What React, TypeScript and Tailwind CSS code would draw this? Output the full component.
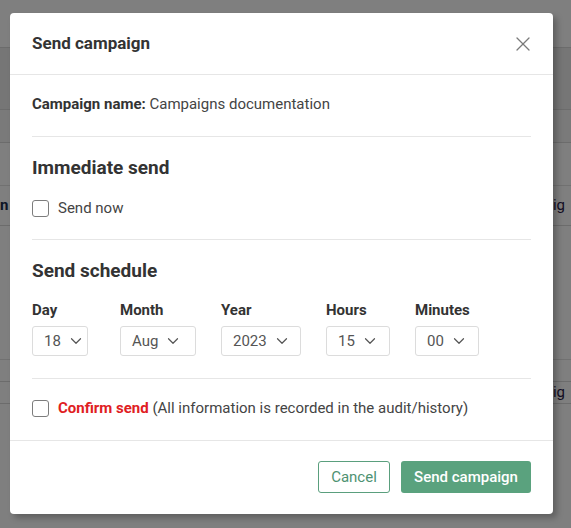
import { ChevronDown, X } from 'lucide-react';

const fields = [
  { label: 'Day', value: '18', col: 'w-[88px]', box: 'w-[56px]' },
  { label: 'Month', value: 'Aug', col: 'w-[101px]', box: 'w-[76px]' },
  { label: 'Year', value: '2023', col: 'w-[105px]', box: 'w-[80px]' },
  { label: 'Hours', value: '15', col: 'w-[89px]', box: 'w-[64px]' },
  { label: 'Minutes', value: '00', col: 'w-[64px]', box: 'w-[64px]' },
];

function Checkbox() {
  return <span className="w-[17px] h-[17px] shrink-0 rounded-[3px] border border-[#7d7d7d] bg-white" />;
}

function Divider() {
  return <div className="h-px bg-[#e6e6e6]" />;
}

export default function App() {
  return (
    <div
      className="relative h-[528px] w-[571px] overflow-hidden bg-white"
      style={{ fontFamily: 'Roboto, "Liberation Sans", sans-serif' }}
    >
      {/* page behind the dialog */}
      <div className="flex flex-col">
        <div className="h-[47px] bg-white" />
        <div className="h-[63px] bg-[#ececec] border-y border-[#d8d8d8]" />
        <div className="h-[33px] bg-[#f4f4f4] border-b border-[#d8d8d8]" />
        <div className="h-[43px] border-b border-[#e2e2e2]" />
        <div className="h-[40px] flex items-center justify-between border-b border-[#d8d8d8] text-[15px]">
          <span className="font-bold text-[#1b2a4a]">n</span>
          <span className="pr-[6px] text-[#2a1a4a]">ig</span>
        </div>
        <div className="h-[134px] border-b border-[#e2e2e2]" />
        <div className="h-[22px] border-b border-[#d8d8d8]" />
        <div className="h-[22px] flex items-center justify-end border-b border-[#d8d8d8] text-[15px] text-[#2a1a4a]">
          <span className="pr-[6px]">ig</span>
        </div>
      </div>

      <div className="absolute inset-0 bg-black/50" />

      <div className="absolute left-[10px] top-[13px] w-[543px] rounded-[4px] bg-white text-[#444] shadow-[4px_4px_6px_rgba(0,0,0,0.25)]">
        <div className="flex h-[62px] items-center justify-between px-[22px] border-b border-[#e6e6e6]">
          <h2 className="text-[17px] font-bold text-[#333]">Send campaign</h2>
          <X className="w-[24px] h-[24px] -mr-[4px] text-[#7a7a7a]" strokeWidth={1.3} />
        </div>

        <div className="px-[22px] pt-[19px] pb-[22px]">
          <p className="text-[15px] leading-[20px]">
            <span className="font-bold text-[#333]">Campaign name:</span> Campaigns documentation
          </p>
          <div className="mt-[22px]"><Divider /></div>

          <h3 className="mt-[19px] text-[19px] leading-[24px] font-bold text-[#333]">Immediate send</h3>
          <label className="mt-[18px] flex items-center gap-[9px] text-[15px] leading-[20px]">
            <Checkbox />
            Send now
          </label>
          <div className="mt-[21px]"><Divider /></div>

          <h3 className="mt-[19px] text-[19px] leading-[24px] font-bold text-[#333]">Send schedule</h3>
          <div className="mt-[17px] flex">
            {fields.map((f) => (
              <div key={f.label} className={f.col}>
                <div className="text-[15px] leading-[20px] font-bold text-[#333]">{f.label}</div>
                <div className={`${f.box} mt-[6px] flex h-[30px] items-center gap-[6px] pl-[11px] rounded-[3px] border border-[#dcdcdc] text-[15px] text-[#555]`}>
                  <span>{f.value}</span>
                  <ChevronDown className="w-[18px] h-[18px] text-[#555]" strokeWidth={1.6} />
                </div>
              </div>
            ))}
          </div>
          <div className="mt-[22px]"><Divider /></div>

          <label className="mt-[19px] flex items-center gap-[9px] text-[15px] leading-[20px]">
            <Checkbox />
            <span>
              <span className="font-bold text-[#e0201f]">Confirm send</span> (All information is recorded in the audit/history)
            </span>
          </label>
        </div>

        <div className="flex justify-end gap-[11px] border-t border-[#e6e6e6] px-[22px] pt-[20px] pb-[21px]">
          <button className="h-[32px] w-[72px] rounded-[3px] border border-[#5a9f7d] bg-white text-[15px] text-[#4e9272]">
            Cancel
          </button>
          <button className="h-[32px] w-[130px] rounded-[3px] bg-[#5aa27e] text-[15px] font-medium text-white">
            Send campaign
          </button>
        </div>
      </div>
    </div>
  );
}
